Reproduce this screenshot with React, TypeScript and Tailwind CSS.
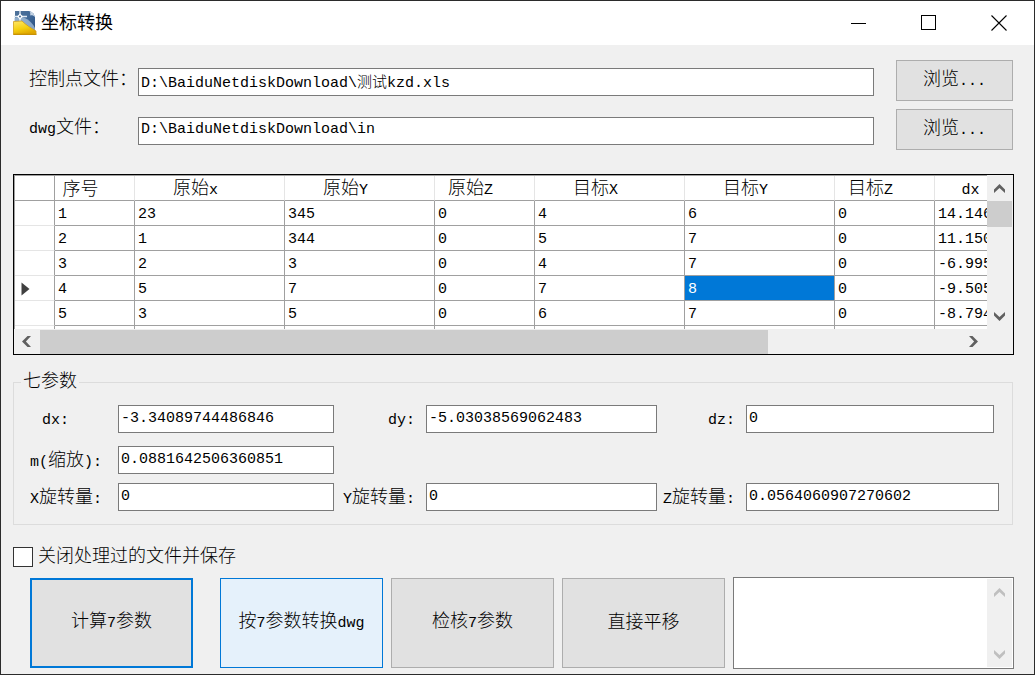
import type { ComponentProps } from "react";

const columns = [
  { name: "序号", width: "w-[80px]" },
  { name: "原始x", width: "w-[150px]" },
  { name: "原始Y", width: "w-[150px]" },
  { name: "原始Z", width: "w-[100px]" },
  { name: "目标X", width: "w-[150px]" },
  { name: "目标Y", width: "w-[150px]" },
  { name: "目标Z", width: "w-[100px]" },
  { name: "dx", width: "w-[100px]" },
];

const rows = [
  ["1", "23", "345", "0", "4", "6", "0", "14.146"],
  ["2", "1", "344", "0", "5", "7", "0", "11.150"],
  ["3", "2", "3", "0", "4", "7", "0", "-6.995"],
  ["4", "5", "7", "0", "7", "8", "0", "-9.505"],
  ["5", "3", "5", "0", "6", "7", "0", "-8.794"],
  ["", "", "", "", "", "", "", ""],
];

const current = { row: 3, col: 5 };

// Latin runs are half the width of a Chinese character
function Text({ children }: { children: string }) {
  return (
    <>
      {children.split(/([\x20-\x7e]+)/).map((part, i) =>
        i % 2 ? (
          <span key={i} className="text-[15px]">
            {part}
          </span>
        ) : (
          part
        )
      )}
    </>
  );
}

function TextBox({ className = "", ...props }: ComponentProps<"input">) {
  return (
    <input
      type="text"
      className={`h-7 min-w-0 border border-[#7a7a7a] bg-white pl-[2px] pb-[2px] text-[15px] outline-none ${className}`}
      {...props}
    />
  );
}

function Button({ className = "", children }: { className?: string; children: string }) {
  return (
    <button type="button" className={`shrink-0 ${className}`}>
      <Text>{children}</Text>
    </button>
  );
}

const rotations = {
  up: "",
  right: "rotate-90",
  down: "rotate-180",
  left: "-rotate-90",
};

function ScrollArrow({ dir, disabled }: { dir: keyof typeof rotations; disabled?: boolean }) {
  return (
    <button
      type="button"
      aria-label={dir}
      disabled={disabled}
      className={`flex h-[26px] w-[25px] shrink-0 items-center justify-center ${
        disabled ? "text-[#bfbfbf]" : "text-[#606060]"
      }`}
    >
      <svg width="11" height="9" viewBox="0 0 11 9" className={rotations[dir]}>
        <path d="M0 5.5 5.5 0 11 5.5V9L5.5 3.9 0 9Z" fill="currentColor" />
      </svg>
    </button>
  );
}

function AppIcon() {
  return (
    <svg width="24" height="26" viewBox="0 0 24 26">
      <defs>
        <linearGradient id="page" x1="0" y1="0" x2="1" y2="1">
          <stop offset="0" stopColor="#4f7299" />
          <stop offset="0.5" stopColor="#3f6898" />
          <stop offset="1" stopColor="#24497a" />
        </linearGradient>
        <linearGradient id="fold" x1="0" y1="0" x2="0.4" y2="1">
          <stop offset="0" stopColor="#ffe76a" />
          <stop offset="0.6" stopColor="#f5d010" />
          <stop offset="1" stopColor="#e0a800" />
        </linearGradient>
      </defs>
      <path d="M2 1H16.5C19.5 2 21 4 22 7V24H2Z" fill="url(#page)" />
      <path d="M16.5 1C17.5 3 17.5 4 17 5.5 19 5 20.5 5.5 22 7 21 4 19.500 2 16.5 1Z" fill="#c5d4e4" />
      <path d="M1 8 8 7C14 8 19 12 22 18V21L1 13Z" fill="#b7cfe6" opacity="0.65" />
      <path d="M1 6.500H14M7 0.500V12" stroke="#dfe9f3" strokeWidth="1.4" />
      <path d="M7 3.500 10 6.500 7 9.500 4 6.500Z" fill="#fff" />
      <circle cx="7" cy="6.500" r="1.1" fill="#4f7299" />
      <path d="M0.500 11.500 9 11C13 15 18 18 23 21V24.500H0.500Z" fill="url(#fold)" stroke="#d0a01c" strokeWidth="0.8" />
      <path d="M0.500 24.300H23.500" stroke="#c78f00" strokeWidth="1.2" />
    </svg>
  );
}

function TitleBar() {
  return (
    <header className="flex h-11 items-center justify-between bg-white">
      <div className="flex items-center gap-1 pl-3">
        <AppIcon />
        <h1 className="pt-[2px] font-normal">坐标转换</h1>
      </div>
      <div className="flex h-full">
        <button type="button" aria-label="最小化" className="flex w-[70px] items-center justify-center">
          <svg width="16" height="16" shapeRendering="crispEdges">
            <path d="M0 8.5H15" stroke="#000" />
          </svg>
        </button>
        <button type="button" aria-label="最大化" className="flex w-[70px] items-center justify-center">
          <svg width="16" height="16" shapeRendering="crispEdges">
            <rect x="0.5" y="0.5" width="14" height="14" fill="none" stroke="#000" />
          </svg>
        </button>
        <button type="button" aria-label="关闭" className="flex w-[70px] items-center justify-center">
          <svg width="16" height="16">
            <path d="M0.5 0.5 15.5 15.5M15.5 0.5 0.5 15.5" stroke="#000" strokeWidth="1.1" />
          </svg>
        </button>
      </div>
    </header>
  );
}

function FileRow({ id, label, value }: { id: string; label: string; value: string }) {
  return (
    <div className="flex items-center pl-4 pr-px">
      <label htmlFor={id} className="w-[109px] pb-[2px]">
        <Text>{label}</Text>
      </label>
      <TextBox id={id} defaultValue={value} className="mt-[2px] flex-1" />
      <Button className="ml-[22px] h-[41px] w-[117px] border border-[#adadad] bg-[#e1e1e1]">浏览...</Button>
    </div>
  );
}

function PointGrid() {
  return (
    <div className="mt-6 border border-black">
      <div className="flex">
        <div className="h-[154px] min-w-0 flex-1 overflow-hidden border-l border-t border-[#a0a0a0] bg-white">
          <table className="w-[1020px] table-fixed border-separate border-spacing-0">
            <thead>
              <tr className="h-[25px]">
                <th className="w-[40px] border-b border-r border-[#a0a0a0] p-0" />
                {columns.map((col) => (
                  <th
                    key={col.name}
                    className={`${col.width} border-b border-r border-b-[#a0a0a0] border-r-[#e5e5e5] p-0 pt-[3px] pr-7 leading-4 font-light`}
                  >
                    <Text>{col.name}</Text>
                  </th>
                ))}
              </tr>
            </thead>
            <tbody>
              {rows.map((row, r) => (
                <tr key={r} className="h-[25px]">
                  <th className="border-b border-r border-b-[#e5e5e5] border-r-[#a0a0a0] p-0 pt-[2px] pl-[6px] leading-4">
                    {r === current.row && (
                      <svg width="9" height="14" viewBox="0 0 9 14">
                        <path d="M0.5 0.5 8.5 7 0.5 13.5Z" fill="#404040" />
                      </svg>
                    )}
                  </th>
                  {row.map((cell, c) => (
                    <td
                      key={c}
                      className={`overflow-hidden border-b border-r border-[#a0a0a0] p-0 pt-[3px] pl-[3px] text-[15px] leading-4 whitespace-nowrap ${
                        r === current.row && c === current.col ? "bg-[#0078d7] text-white" : ""
                      }`}
                    >
                      {cell}
                    </td>
                  ))}
                </tr>
              ))}
            </tbody>
          </table>
        </div>
        <div className="flex w-[26px] flex-col pr-px">
          <ScrollArrow dir="up" />
          <div className="h-[26px] bg-[#cdcdcd]" />
          <div className="flex-1" />
          <ScrollArrow dir="down" />
        </div>
      </div>
      <div className="flex h-[25px] items-center pr-[27px]">
        <ScrollArrow dir="left" />
        <div className="flex h-6 flex-1 pl-px">
          <div className="w-[79%] bg-[#cdcdcd]" />
        </div>
        <ScrollArrow dir="right" />
      </div>
    </div>
  );
}

function Parameters() {
  return (
    <fieldset className="mt-[18px] mr-px border border-[#dcdcdc] pr-[13px] pt-[14px] pb-[13px]">
      <legend className="ml-[7px] px-[2px] leading-[18px]">七参数</legend>
      <div className="grid grid-cols-[104px_216fr_92px_231fr_89px_253fr] items-center">
        <label htmlFor="dx" className="pt-[2px] pl-7">
          <Text>dx:</Text>
        </label>
        <TextBox id="dx" defaultValue="-3.34089744486846" />
        <label htmlFor="dy" className="pt-[2px] pr-[11px] text-right">
          <Text>dy:</Text>
        </label>
        <TextBox id="dy" defaultValue="-5.03038569062483" />
        <label htmlFor="dz" className="pt-[2px] pr-[11px] text-right">
          <Text>dz:</Text>
        </label>
        <TextBox id="dz" defaultValue="0" className="mr-[5px]" />

        <label htmlFor="m" className="mt-[13px] pt-[3px] pl-4">
          <Text>m(缩放):</Text>
        </label>
        <TextBox id="m" defaultValue="0.0881642506360851" className="mt-[13px]" />

        <label htmlFor="rx" className="col-start-1 mt-[9px] pt-[3px] pl-4">
          <Text>X旋转量:</Text>
        </label>
        <TextBox id="rx" defaultValue="0" className="mt-[9px]" />
        <label htmlFor="ry" className="mt-[9px] pt-[3px] pr-[11px] text-right">
          <Text>Y旋转量:</Text>
        </label>
        <TextBox id="ry" defaultValue="0" className="mt-[9px]" />
        <label htmlFor="rz" className="mt-[9px] pt-[3px] pr-[11px] text-right">
          <Text>Z旋转量:</Text>
        </label>
        <TextBox id="rz" defaultValue="0.0564060907270602" className="mt-[9px]" />
      </div>
    </fieldset>
  );
}

export default function App() {
  return (
    <div className="min-h-screen border border-[#2b2b2b] bg-[#f0f0f0] font-['Liberation_Mono','Noto_Sans_CJK_SC',monospace] text-[18px] leading-5 font-light text-black">
      <TitleBar />
      <main className="pt-[15px] pr-5 pb-[5px] pl-3">
        <div className="flex flex-col gap-2">
          <FileRow id="points" label="控制点文件：" value="D:\BaiduNetdiskDownload\测试kzd.xls" />
          <FileRow id="dwg" label="dwg文件：" value="D:\BaiduNetdiskDownload\in" />
        </div>

        <PointGrid />
        <Parameters />

        <div className="mt-[22px] flex h-5 items-center gap-[5px]">
          <input
            id="close"
            type="checkbox"
            className="h-5 w-5 appearance-none border border-[#333333] bg-white checked:bg-[#0078d7]"
          />
          <label htmlFor="close" className="pb-px">
            关闭处理过的文件并保存
          </label>
        </div>

        <div className="mt-[10px] flex items-center gap-2 pl-[17px]">
          <Button className="mr-[19px] h-[90px] w-[163px] border-2 border-[#0078d7] bg-[#e1e1e1]">计算7参数</Button>
          <Button className="h-[90px] w-[163px] border border-[#0078d7] bg-[#e5f1fb]">按7参数转换dwg</Button>
          <Button className="h-[90px] w-[163px] border border-[#adadad] bg-[#e1e1e1]">检核7参数</Button>
          <Button className="h-[90px] w-[163px] border border-[#adadad] bg-[#e1e1e1]">直接平移</Button>
          <div className="flex h-[92px] min-w-0 flex-1 border border-[#7a7a7a] bg-white p-px">
            <textarea aria-label="日志" className="min-w-0 flex-1 resize-none text-[15px] outline-none" />
            <div className="flex w-[25px] flex-col justify-between bg-[#f0f0f0]">
              <ScrollArrow dir="up" disabled />
              <ScrollArrow dir="down" disabled />
            </div>
          </div>
        </div>
      </main>
    </div>
  );
}
